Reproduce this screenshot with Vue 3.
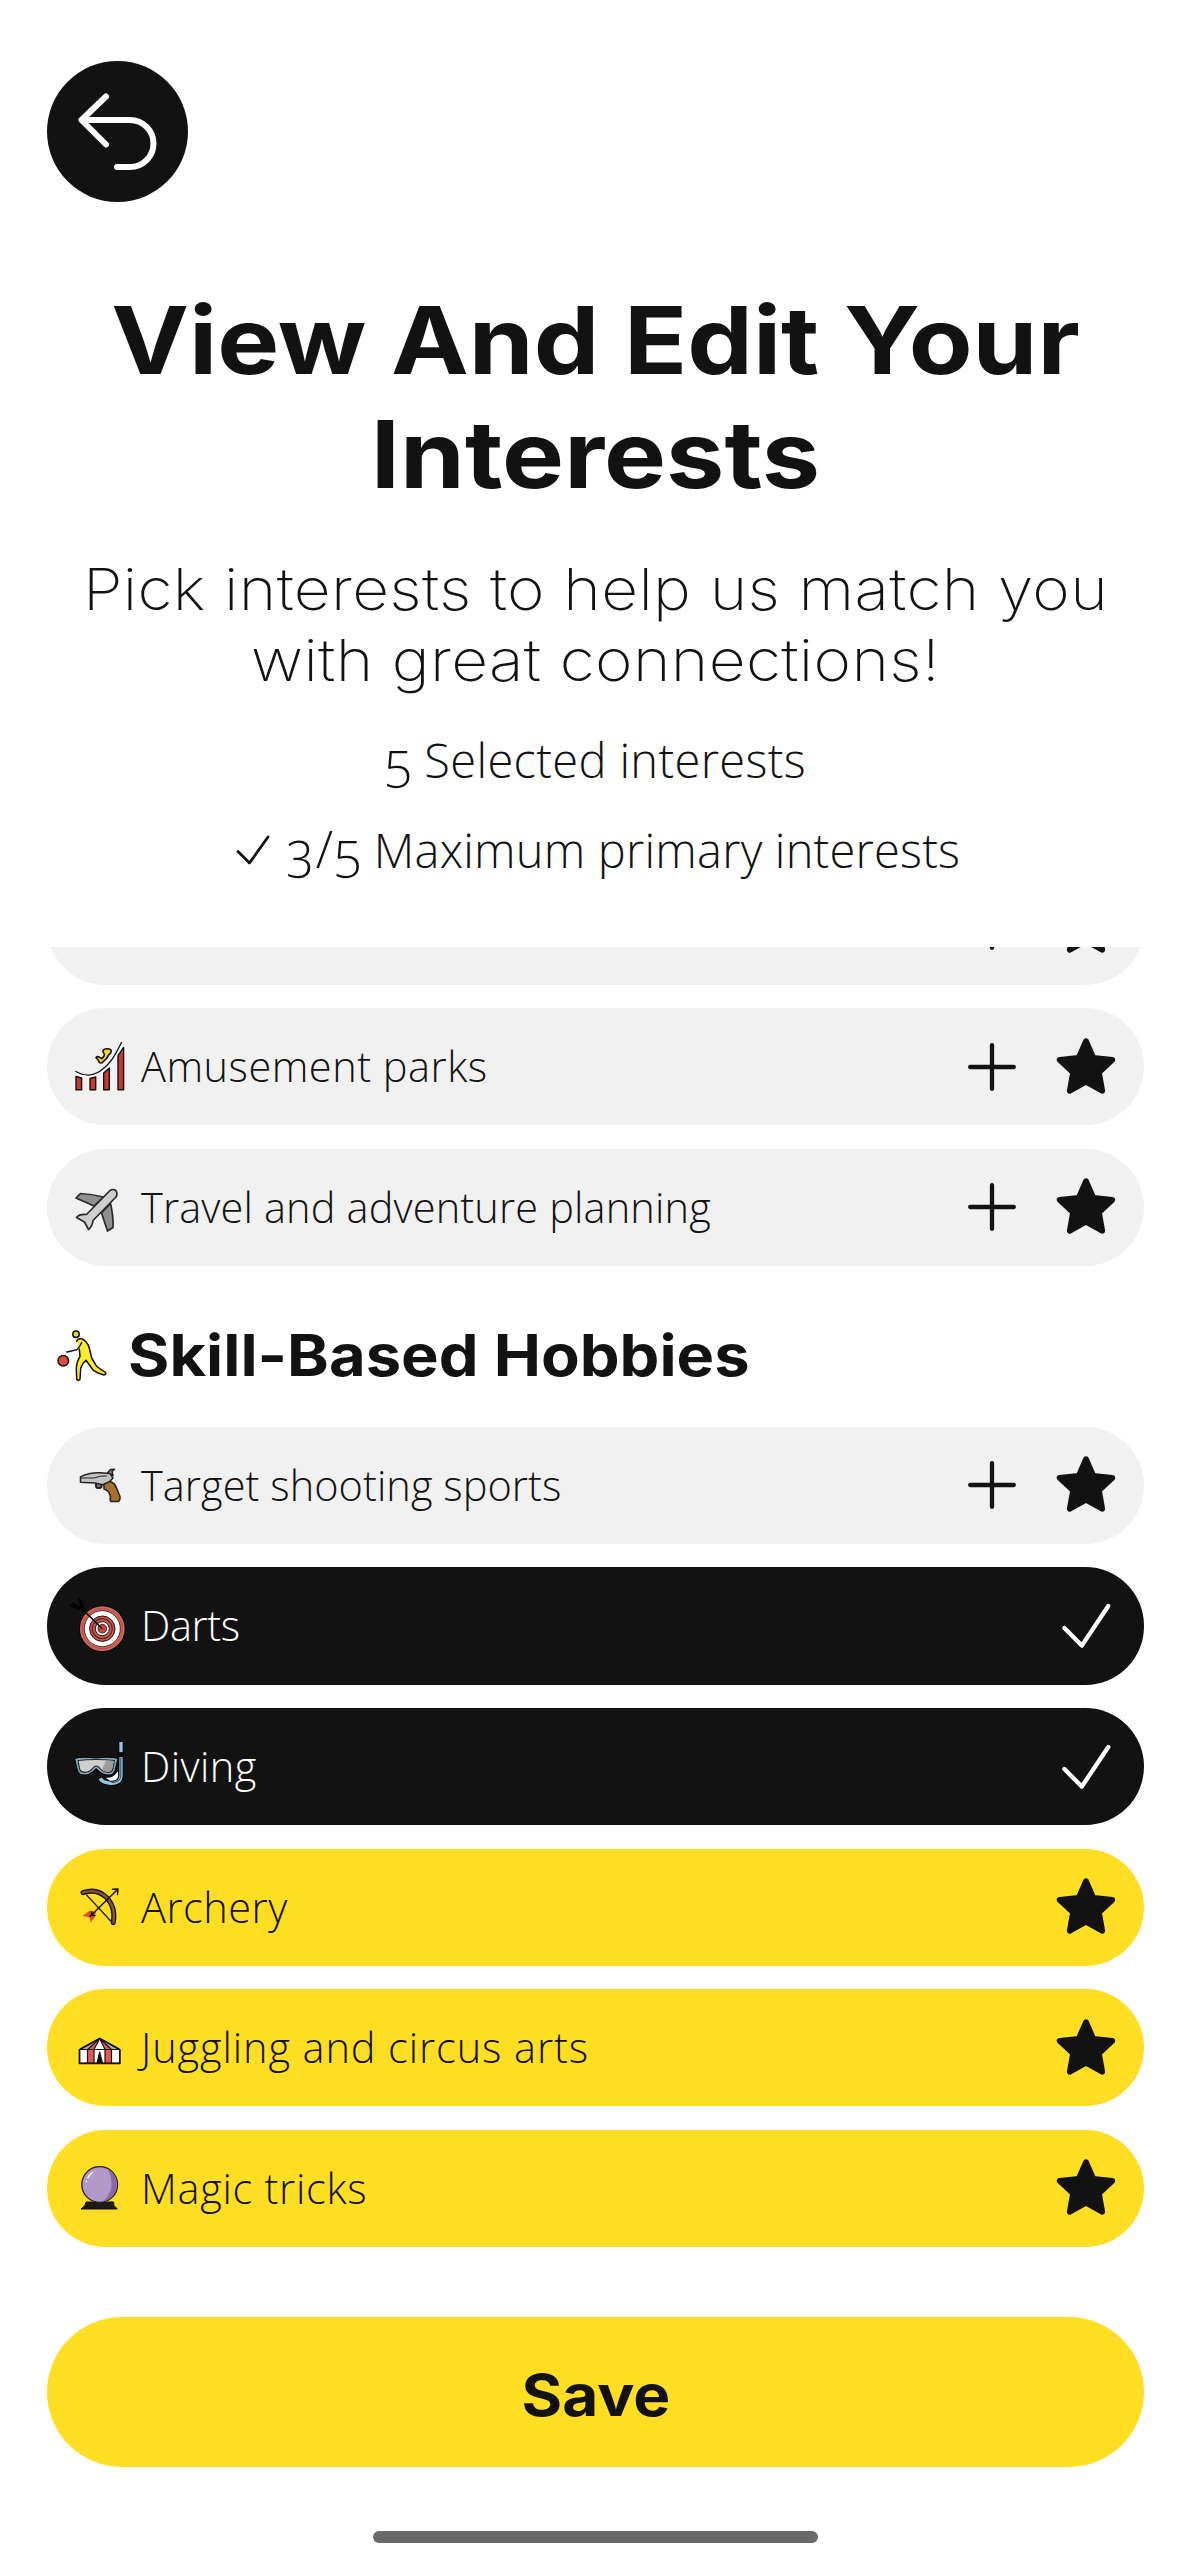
<script setup>
const hobbies = [
  { icon: 'coaster', label: 'Amusement parks', state: 'idle', spacing: 0.5 },
  { icon: 'plane', label: 'Travel and adventure planning', state: 'idle', spacing: 0.15 },
]
const skills = [
  { icon: 'pistol', label: 'Target shooting sports', state: 'idle', spacing: 0.05 },
  { icon: 'darts', label: 'Darts', state: 'selected', spacing: -0.4 },
  { icon: 'diving', label: 'Diving', state: 'selected', spacing: 0.4 },
  { icon: 'bow', label: 'Archery', state: 'primary', spacing: 0.5 },
  { icon: 'circus', label: 'Juggling and circus arts', state: 'primary', spacing: 0.9 },
  { icon: 'orb', label: 'Magic tricks', state: 'primary', spacing: 0.7 },
]
const groups = [
  { title: '', items: [{ icon: '', label: '', state: 'idle', spacing: 0 }, ...hobbies] },
  { title: 'Skill-Based Hobbies', items: skills },
]
</script>

<template>
  <main class="screen">
    <button class="back" aria-label="Back">
      <svg viewBox="0 0 141 141">
        <path d="M59 35.5 34.5 59 59 83.500M35 59H83a23.500 23.500 0 0 1 0 47H70" />
      </svg>
    </button>

    <header class="intro">
      <h1>View And Edit Your<br />Interests</h1>
      <p class="lead">Pick interests to help us match you<br />with great connections!</p>
      <p class="count"><span class="digits">5</span> Selected interests</p>
      <p class="count limit">
        <svg viewBox="0 0 34 32"><path d="M2 17.500 13.500 29 32 3" /></svg>
        <span><span class="digits">3/5</span> Maximum primary interests</span>
      </p>
    </header>

    <section class="list">
      <template v-for="group in groups" :key="group.title">
        <h2 v-if="group.title">
          <svg class="emoji" viewBox="0 0 54 54">
            <g stroke="#111" stroke-width="1.500" stroke-linejoin="round" stroke-linecap="round">
              <circle cx="21" cy="6.300" r="3.200" fill="#e8d84a" />
              <circle cx="8.300" cy="32.700" r="5.300" fill="#e0493f" />
              <path fill="#fcea2b" d="M21.700 13.500Q22 10.300 26.700 10.700C31 13 33.500 17 34.300 20L36.700 30 41.700 38.300Q46 42 50.500 44.300Q51.500 46.500 49 47Q43 45.500 38.300 42.300L31 32.300Q27 35.500 25.700 40L25 51.300Q23.300 53.500 21.700 51.300L21.300 40Q21.800 33 25 28.300L24.300 21" />
              <path fill="none" d="M26.700 14.500Q24 20 21.700 21.700L12 24" />
            </g>
          </svg>
          <span>{{ group.title }}</span>
        </h2>

        <div v-for="item in group.items" :key="item.label" class="row" :class="item.state">
          <svg class="emoji" viewBox="0 0 54 54">
            <g v-if="item.icon === 'coaster'" stroke="#111" stroke-width="1.400" stroke-linejoin="round" stroke-linecap="round">
              <path fill="#c9382d" d="M4 36.500 9.600 38V49.800H4ZM18 38.500 23.700 37V49.800H18ZM31.700 33 37.300 28V49.800H31.700ZM46 15.500 51.600 7.500V49.800H46Z" />
              <path fill="none" stroke-width="1.300" d="M3.800 31.500C12 36.500 21 36 29 30.500C39 23.500 43 15 49.500 2.500" />
              <path fill="none" stroke="#fff" stroke-width="1.200" d="M3.800 33.300C12 38.200 22 37.500 30 32C40 25 44 17 50.500 5" />
              <path fill="#f5d327" stroke-width="1.600" d="M24 17.500C26 15 28 17.500 29.500 18.500C33 16.500 33 14 31 12C30.500 9 35 8 38.500 9.500Q40.500 12 37 14.500L34.500 18.500 30 22.800Q27 23.500 26.500 20.500Z" />
            </g>
            <g v-else-if="item.icon === 'plane'" stroke="#2b2b2b" stroke-width="1.700" stroke-linejoin="round">
              <path fill="#8f8f8f" d="M4 18 8.500 13.500Q20 14 31.500 17L22 26ZM29.500 33 38.500 23.500Q41.500 36 41 47.500L35.500 51Z" />
              <path fill="#d0cfce" d="M38 10.500Q41 8.500 43.800 10.500Q46 13.500 44 17L21 40.500Q20.500 46 16.500 49.500L12.500 42 4.500 37.500Q7 34 14.500 34.500Z" />
            </g>
            <g v-else-if="item.icon === 'pistol'" stroke="#222" stroke-width="1.500" stroke-linejoin="round">
              <path fill="#9b9b9a" d="M35.500 15 38.500 11.500 42.500 11.200 40 13.500 41 17.500Z" />
              <rect x="24" y="23" width="5.500" height="7" rx="2" fill="#777" stroke-width="2" />
              <path fill="#c5c5c5" d="M8.500 18.800Q17 14.500 28 14.800L38 15.500 41 20 34 27.500 23 25 8.500 24.200Z" />
              <path fill="none" stroke-width="1" d="M9 20H22Q28 17.500 35 18" />
              <path fill="#a8702b" d="M32 26 38 23.500Q43 25 44.500 30L48 38.500Q48.500 43.500 45 43.500H39Q37.500 42 38.500 39Q37.500 32.500 32 31Z" />
            </g>
            <g v-else-if="item.icon === 'darts'">
              <circle cx="30.300" cy="29.700" r="23.500" fill="#050505" />
              <circle cx="30.300" cy="29.700" r="22.400" fill="#d3655a" />
              <circle cx="30.300" cy="29.700" r="20" fill="none" stroke="#b84e45" stroke-width="1" />
              <circle cx="30.300" cy="29.700" r="18" fill="#fff" stroke="#211" stroke-width=".8" />
              <circle cx="30.300" cy="29.700" r="12.700" fill="#c65a50" stroke="#211" stroke-width="1" />
              <circle cx="30.300" cy="29.700" r="10" fill="none" stroke="#612a26" stroke-width="1.200" />
              <circle cx="30.300" cy="29.700" r="7" fill="#fff" stroke="#211" stroke-width="1" />
              <circle cx="30.300" cy="29.700" r="4.300" fill="#c9483c" stroke="#611" stroke-width="1" />
              <path d="M7 7 30.300 29.700M0 4 10 10 7-1M-2 6 8 11 12 10 9 1" fill="none" stroke="#000" stroke-width="1.500" />
            </g>
            <g v-else-if="item.icon === 'diving'" stroke-linejoin="round" fill="none">
              <path fill="#fff" d="M34 37.500Q41 39 45.500 31.500Q48 36 44.500 40.500Q39 43.500 34 37.500Z" />
              <path stroke="#000" stroke-width="5.500" d="M49 1.500V36Q48.500 43.500 39.500 43.500 31 43 28 38.500" />
              <path stroke="#8fc7ea" stroke-width="3.300" d="M49 2V36Q48.500 43.300 39.500 43.300 31 43 28 38.500" />
              <path stroke="#274a61" stroke-width="1" d="M48.800 18V36Q48 42.500 39.500 42.500" />
              <path stroke="#000" stroke-width="5" d="M45 14.700H52" />
              <path fill="#8aa9bb" stroke="#000" stroke-width="1.200" d="M2.500 18.500Q10 16 24 18 37 16 46 18.500L43.500 29Q42.500 35 36.500 35 30 35 24.200 28.800 18.500 35 12 35 6 35 5 29Z" />
              <path fill="#d0cfce" stroke="#1c2730" stroke-width="1.200" d="M6 20.500Q24 18.500 42.500 20.500L40.800 29Q40 32.300 36 32.300 30.500 32 27.500 28 24.200 24 21 28 18 32.300 12.500 32.300 8.500 32 7.600 29Z" />
              <path fill="#9b9b9a" d="M34 20.500 41.800 21 40 29Q39.500 31.700 36 31.700 32 31.500 30 29.500Z" />
            </g>
            <g v-else-if="item.icon === 'bow'" stroke-linecap="round" stroke-linejoin="round" fill="none">
              <path stroke="#1d1208" stroke-width="5" d="M11 12.700Q25 8 34.500 17.500 44 27 41.300 42.700" />
              <path stroke="#80593a" stroke-width="2.300" d="M11 12.700Q25 8 34.500 17.500 44 27 41.300 42.700" />
              <path stroke="#222" stroke-width="1.300" d="M14.700 15 38.700 41" />
              <path fill="#e8442f" stroke="#c9661e" stroke-width=".6" d="M11.500 35.500 18 30.800 23.500 32 22.500 37 18.500 42.300 18 37.500Z" />
              <path stroke="#1a1205" stroke-width="1.500" d="M18 36.500 45.500 9.500M40.500 9.300 46 8.900 45.500 14.500M19.500 32V35.500H23" />
            </g>
            <g v-else-if="item.icon === 'circus'" stroke="#1b1313" stroke-width="1.200" stroke-linejoin="round">
              <path fill="#fff" d="M7.500 28.500H47.800V42.300H7.500Z" />
              <path fill="#dd5b52" d="M15.500 28.500H22V42.300H15.500ZM33 28.500H39.500V42.300H33Z" />
              <path fill="#fff" d="M27.700 17.500 8 28.500H47.500Z" />
              <path fill="#dd5b52" d="M27.700 17.500 15.500 28.500H22ZM27.700 17.500 33 28.500H39.500Z" />
              <path fill="#555" stroke-width=".8" d="M27.700 17.500 8 28.500 15.500 28.500ZM27.700 17.500 47.500 28.500H39.500Z" opacity=".45" />
              <path fill="#111" d="M27.700 31 30.500 42.300H25Z" />
              <path fill="none" stroke-width="1.700" d="M7.500 28.500V42.300H47.800V28.500M8 28.300 27.700 17.500 47.500 28.300" />
            </g>
            <g v-else-if="item.icon === 'orb'">
              <path fill="#1c1a17" stroke="#111" stroke-linejoin="round" d="M14 41H41.500L42 44.500 45.300 48H9L13 44.500Z" />
              <circle cx="27.700" cy="23.500" r="17.900" fill="#b399c8" stroke="#2b1c22" stroke-width="1.300" />
              <path fill="#8967aa" d="M36 8.500A17.300 17.300 0 0 1 31 40.500Q45 28 36 8.500Z" />
              <path fill="none" stroke="#fff" stroke-width="1.500" stroke-linecap="round" stroke-dasharray="7 4 1 30" d="M20.500 11.500Q16 14.500 14.500 20.500" />
            </g>
          </svg>
          <span class="label" :style="{ letterSpacing: item.spacing + 'px' }">{{ item.label }}</span>

          <svg v-if="item.state === 'idle'" class="action" viewBox="0 0 60 60">
            <path d="M8.200 30H51.800M30 8.200V51.800" />
          </svg>
          <svg v-if="item.state === 'selected'" class="action" viewBox="0 0 60 60">
            <path d="M8.400 32 25.800 49.600 52.300 10" />
          </svg>
          <svg v-else class="action star" viewBox="0 0 60 60">
            <path d="M30 4.200 37.300 20.800 56.300 22.800 42.900 35.300 46.200 53.800 30 44.800 13.800 53.800 17.100 35.300 3.700 22.800 22.700 20.800Z" />
          </svg>
        </div>
      </template>
    </section>

    <button class="save"><span>Save</span></button>
    <div class="home-bar"></div>
  </main>
</template>

<style>
body {
  background: #fff;
}
</style>

<style scoped>
.screen {
  --ink: #121212;
  box-sizing: border-box;
  width: 1183px;
  height: 2560px;
  padding: 61px 39px 0 47px;
  overflow: hidden;
  display: flex;
  flex-direction: column;
  color: var(--ink);
  background: #fff;
  font-family: 'Open Sans', sans-serif;
  font-weight: 300;
}

button {
  border: 0;
  padding: 0;
}

svg {
  display: block;
  flex: none;
}

.back {
  width: 141px;
  height: 141px;
  border-radius: 50%;
  background: var(--ink);
}

.back path {
  fill: none;
  stroke: #fff;
  stroke-width: 6;
  stroke-linecap: round;
  stroke-linejoin: round;
}

.intro {
  box-sizing: border-box;
  height: 744.700px;
  padding-top: 81px;
  text-align: center;
  white-space: nowrap;
}

h1,
h2,
p {
  margin: 0;
}

h1 {
  font: 700 93px/114px Inter, sans-serif;
  transform: scaleX(1.12);
}

.lead {
  margin-top: 42.500px;
  font: 200 58px/71px Inter, sans-serif;
  letter-spacing: 0.300px;
  transform: scaleX(1.104);
}

.count {
  margin-top: 34.500px;
  font-size: 47px;
  font-weight: 350;
  line-height: 60px;
  letter-spacing: 0.350px;
  font-variant-numeric: oldstyle-nums;
}

.digits {
  margin-right: -2px;
  font-size: 51px;
  line-height: 1;
  letter-spacing: 1.500px;
}

.limit {
  margin-top: 30px;
  padding-left: 5px;
  display: flex;
  align-items: center;
  justify-content: center;
  gap: 17px;
  letter-spacing: 0.200px;
}

.limit svg {
  width: 34px;
  height: 32px;
}

.limit path {
  fill: none;
  stroke: var(--ink);
  stroke-width: 2.800;
  stroke-linecap: round;
  stroke-linejoin: round;
}

.list {
  height: 1301px;
  overflow: hidden;
  display: flex;
  flex-direction: column;
  gap: 23.400px;
}

.row {
  box-sizing: border-box;
  flex: none;
  height: 117.200px;
  padding: 0 28.500px 0 25px;
  border-radius: 58.600px;
  display: flex;
  align-items: center;
  background: #f1f1f1;
}

.row:first-child {
  margin-top: -79.200px;
}

.emoji {
  width: 54px;
  height: 54px;
  overflow: visible;
}

.label {
  flex: 1;
  margin-left: 15px;
  padding-bottom: 1px;
  font-size: 41.500px;
  line-height: 60px;
  white-space: nowrap;
}

.action {
  width: 60px;
  height: 60px;
}

.action + .action {
  margin-left: 33.500px;
}

.action path {
  fill: none;
  stroke: currentColor;
  stroke-width: 4.300;
  stroke-linecap: round;
  stroke-linejoin: round;
}

.star path {
  fill: currentColor;
  stroke-width: 5.800;
}

.selected {
  color: #fff;
  background: var(--ink);
}

.primary {
  background: #ffde24;
}

h2 {
  height: 70px;
  margin: 31px 0 13.200px;
  padding-left: 8px;
  display: flex;
  align-items: center;
  font: 700 57.500px/70px Inter, sans-serif;
}

h2 span {
  margin-left: 19px;
  white-space: nowrap;
  transform: scaleX(1.1);
  transform-origin: left;
}

.save {
  flex: none;
  height: 149.500px;
  margin-top: 69.500px;
  padding-top: 6px;
  border-radius: 75px;
  color: var(--ink);
  background: #ffde24;
  font: 700 57.500px/70px Inter, sans-serif;
}

.save span {
  display: inline-block;
  transform: scaleX(1.08);
}

.home-bar {
  flex: none;
  align-self: center;
  width: 445px;
  height: 11.500px;
  margin-top: 64.500px;
  border-radius: 6px;
  background: #6a6a6a;
}
</style>
